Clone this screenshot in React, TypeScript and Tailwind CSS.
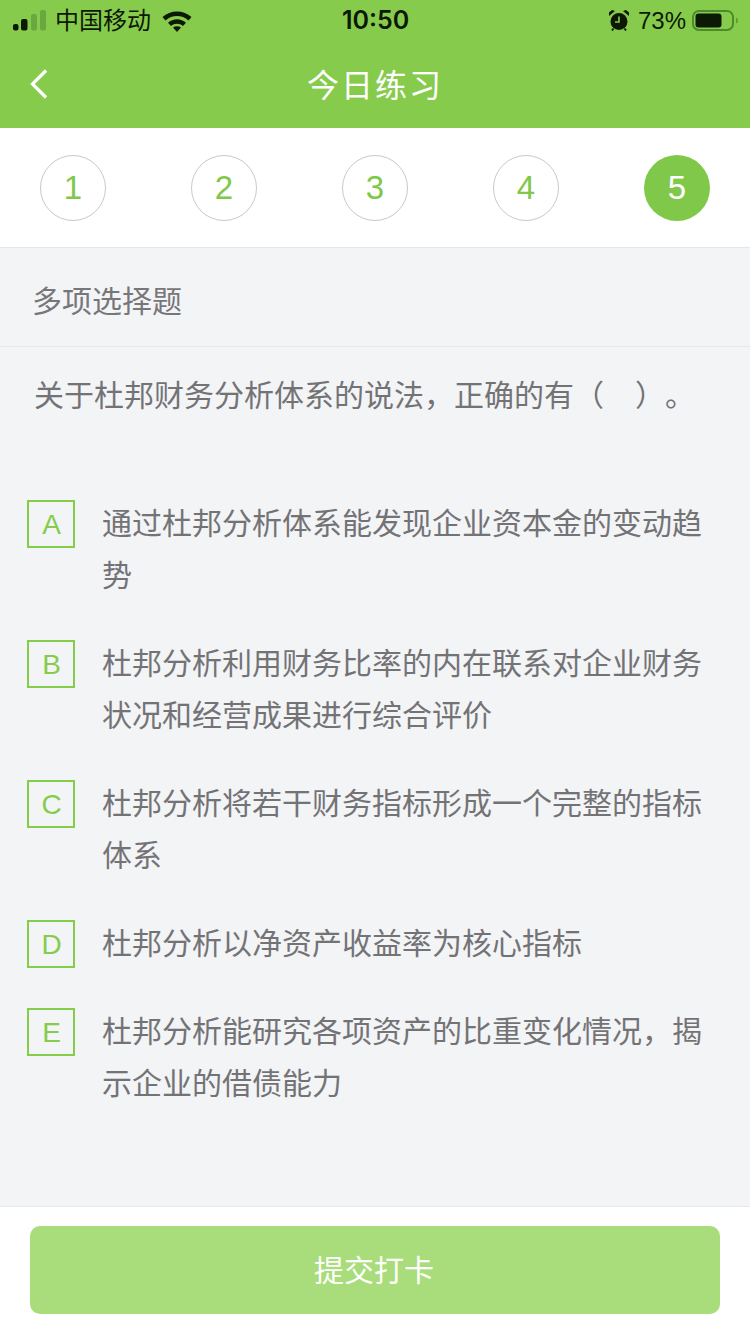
const STEPS = [1, 2, 3, 4, 5];

const OPTIONS = [
  { key: "A", text: "通过杜邦分析体系能发现企业资本金的变动趋势" },
  { key: "B", text: "杜邦分析利用财务比率的内在联系对企业财务状况和经营成果进行综合评价" },
  { key: "C", text: "杜邦分析将若干财务指标形成一个完整的指标体系" },
  { key: "D", text: "杜邦分析以净资产收益率为核心指标" },
  { key: "E", text: "杜邦分析能研究各项资产的比重变化情况，揭示企业的借债能力" },
];

const FONT = "font-['Liberation_Sans','Noto_Sans_CJK_SC',sans-serif]";

function StatusBar() {
  return (
    <div className="flex h-10 items-center justify-between pl-[13px] pr-[12px] pt-[1px] text-[#0c1a05]">
      <div className="flex flex-1 items-center">
        <svg width="34" height="21" viewBox="0 0 34 21" className="mr-2">
          <rect x="0" y="14" width="5.5" height="6.5" rx="2" fill="#0c1a05" />
          <rect x="8" y="9" width="6.5" height="11.5" rx="2" fill="#0c1a05" />
          <rect x="18" y="4" width="6" height="16.5" rx="2" fill="#6aa83f" />
          <rect x="27" y="0" width="6" height="20.5" rx="2" fill="#6aa83f" />
        </svg>
        <span className="text-[24px] leading-none">中国移动</span>
        <svg width="30" height="22" viewBox="0 0 30 22" className="ml-[11px]">
          <path d="M0.5 7C8 -0.5 22 -0.5 29.5 7L26.5 10.5C20 4.6 10 4.6 3.5 10.5Z" fill="#0c1a05" />
          <path d="M6 12.8C11 8 19 8 24 12.8L21 16C17.5 13 12.5 13 9 16Z" fill="#0c1a05" />
          <path d="M11 17.6C13.4 15.8 16.6 15.8 19 17.6L15 22Z" fill="#0c1a05" />
        </svg>
      </div>
      <span className="font-['Inter',sans-serif] text-[25px] font-semibold leading-none">10:50</span>
      <div className="flex flex-1 items-center justify-end">
        <svg width="20" height="21" viewBox="0 0 20 21" className="mr-[9px]">
          <circle cx="10" cy="11.5" r="8.5" fill="#0c1a05" />
          <path d="M10 6.5V12H6" stroke="#86cc4c" strokeWidth="1.6" fill="none" />
          <path d="M0 6 6 1 3 0 0 2.5ZM20 6 14 1 17 0 20 2.5Z" fill="#0c1a05" />
          <path d="M4.5 18.5 3 20.5M15.5 18.5 17 20.5" stroke="#0c1a05" strokeWidth="1.8" />
        </svg>
        <span className="text-[24px] leading-none">73%</span>
        <svg width="48" height="24" viewBox="0 0 48 24" className="ml-[4px]">
          <rect x="3" y="2" width="40" height="19" rx="6" fill="none" stroke="#4d8a2a" strokeWidth="2" />
          <rect x="5.5" y="4.5" width="26" height="14" rx="3" fill="#0c1a05" />
          <path d="M46 8.5C47.5 9 48 10 48 11.5C48 13 47.5 14 46 14.5Z" fill="#5e9c35" />
        </svg>
      </div>
    </div>
  );
}

function NavBar() {
  return (
    <div className="relative flex h-[88px] items-center justify-center pt-[3px]">
      <svg width="18" height="30" viewBox="0 0 18 30" className="absolute left-[30px] top-[29px]">
        <path d="M16 1.5 2.5 15 16 28.5" fill="none" stroke="#fff" strokeWidth="3.2" />
      </svg>
      <h1 className="text-[32px] font-normal leading-none tracking-[2px] text-white">今日练习</h1>
    </div>
  );
}

export default function App() {
  return (
    <div className={`flex h-[1334px] w-[750px] flex-col bg-[#f3f4f6] ${FONT}`}>
      <div className="h-[128px] bg-[#87cb4d]">
        <StatusBar />
        <NavBar />
      </div>

      <div className="flex h-[120px] items-center justify-between border-b border-[#e6e6e6] bg-white px-10 pt-[1px]">
        {STEPS.map((n) =>
          n === 5 ? (
            <div
              key={n}
              className="flex h-[66px] w-[66px] items-center justify-center rounded-full bg-[#7fc84a] text-[33px] text-white"
            >
              {n}
            </div>
          ) : (
            <div
              key={n}
              className="flex h-[66px] w-[66px] items-center justify-center rounded-full border border-[#c9c9c9] text-[33px] text-[#7fc84a]"
            >
              {n}
            </div>
          ),
        )}
      </div>

      <div className="flex h-[99px] items-center border-b border-[#e6e7ea] pl-8 pt-[9px] text-[30px] text-[#77777a]">
        多项选择题
      </div>

      <div className="flex-1">
        <p className="whitespace-pre pl-[34px] pt-[25px] text-[30px] leading-[48px] text-[#737376] [text-spacing-trim:space-all] [word-spacing:2px]">
          关于杜邦财务分析体系的说法，正确的有（   ）。
        </p>
        <ul className="mt-[78px] flex flex-col gap-9 pl-[27px] pr-[46px]">
          {OPTIONS.map((o) => (
            <li key={o.key} className="flex items-start">
              <span className="mt-[2px] flex h-12 w-12 shrink-0 items-center justify-center border-2 border-[#86cc4c] pl-[1px] pt-[1px] text-[28px] leading-none text-[#86cc4c]">
                {o.key}
              </span>
              <span className="ml-[27px] text-[30px] leading-[52px] text-[#737376]">{o.text}</span>
            </li>
          ))}
        </ul>
      </div>

      <div className="h-[128px] border-t border-[#e8e9ec] bg-white px-[30px] pt-[19px]">
        <button className="flex h-[88px] w-full items-center justify-center rounded-[10px] bg-[#a9dc7a] pr-[2px] text-[30px] text-white">
          提交打卡
        </button>
      </div>
    </div>
  );
}
